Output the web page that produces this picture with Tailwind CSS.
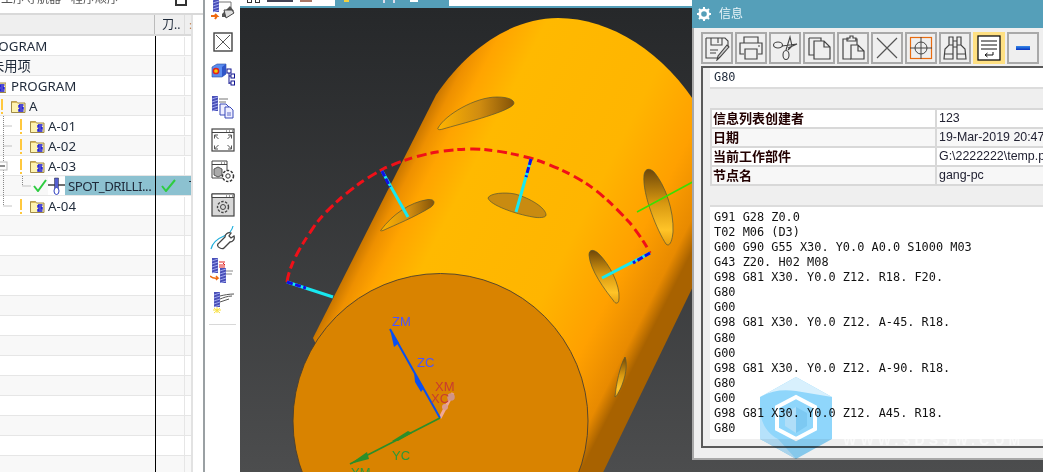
<!DOCTYPE html>
<html lang="en">
<head>
  <meta charset="UTF-8" />
  <title>NX CAM info</title>
  <script src="https://cdn.jsdelivr.net/npm/@tailwindcss/browser@4"></script>
</head>
<body class="bg-white overflow-hidden">

<svg width="0" height="0" class="absolute">
  <defs>
    <g id="folder">
      <path d="M.5 2.500h5l1 1.500h7.500v9.500H.5z" fill="#fdf3b0" stroke="#a08a45"/>
      <path d="M1 2.500h5l1 1.500H1z" fill="#d8b860"/>
      <path d="M8 6h4.500M8 6v2h4M12 8v2H8M8 10v2h4.500" fill="none" stroke="#1515e0" stroke-width="1.400"/>
    </g>
    <g id="tool">
      <rect x="0" y="0" width="6" height="15" fill="#4a50b8"/>
      <path d="M0 3l6-2M0 6l6-2M0 9l6-2M0 12l6-2M0 15l6-2" stroke="#a8b0f0" stroke-width=".9"/>
    </g>
    <linearGradient id="cyl" gradientUnits="userSpaceOnUse" x1="313" y1="338" x2="580" y2="473">
      <stop offset="0" stop-color="#c97600"/>
      <stop offset=".04" stop-color="#ee9000"/>
      <stop offset=".1" stop-color="#ffa400"/>
      <stop offset=".22" stop-color="#ffb900"/>
      <stop offset=".62" stop-color="#ffb500"/>
      <stop offset=".82" stop-color="#ffa000"/>
      <stop offset=".95" stop-color="#e88a00"/>
      <stop offset="1" stop-color="#a86200"/>
    </linearGradient>
    <linearGradient id="holeA" x1="0" y1="0" x2="1" y2="0">
      <stop offset="0" stop-color="#ffb400"/>
      <stop offset=".55" stop-color="#d08c10"/>
      <stop offset="1" stop-color="#855408"/>
    </linearGradient>
    <linearGradient id="holeB" x1="0" y1="0" x2="0" y2="1">
      <stop offset="0" stop-color="#6f4708"/>
      <stop offset=".45" stop-color="#d89810"/>
      <stop offset=".8" stop-color="#ffc428"/>
      <stop offset="1" stop-color="#e8a010"/>
    </linearGradient>
  </defs>
</svg>

<div class="relative flex h-[472px] w-[1043px] overflow-hidden font-['Noto_Sans','Noto_Sans_CJK_SC',sans-serif] text-[#1f2a3a]">

  <!-- Operation navigator -->
  <aside class="relative w-[203px] shrink-0 overflow-hidden">
    <div class="flex h-[15px] items-start justify-between overflow-hidden border-b-2 border-[#d9d9d9] pr-[16px]">
      <span class="-translate-y-[8px] whitespace-nowrap pl-[1px] text-[12px] leading-[13px] text-[#555]">工序导航器 - 程序顺序</span>
      <span class="h-[6px] w-[12px] border-2 border-t-0 border-[#333]"></span>
    </div>
    <div class="w-[193px] border-r-2 border-[#e2e2e2]">
      <!-- header -->
      <div class="flex h-[21px] border-b-2 border-[#d9d9d9] bg-[#efefef]">
        <div class="w-[155px] border-r border-[#bbb]"></div>
        <div class="w-[30px] border-r border-[#ddd] pl-[7px] text-[12px] leading-[20px]">刀..</div>
        <div class="w-[6px] pl-[4px] text-[11px] leading-[20px] text-[#c08050]">:</div>
      </div>
      <!-- rows -->
      <div class="flex flex-col text-[13.300px] leading-[19px]">
        <div class="flex h-[20px] items-center border-b border-[#e6e6e6] bg-white pt-[1px]"><div class="w-[155px] shrink-0 overflow-hidden"><div class="-ml-[18px]">PROGRAM</div></div><div class="h-full w-[30px] border-r border-[#e6e6e6]"></div></div>
        <div class="flex h-[20px] items-center border-b border-[#e6e6e6] bg-[#f8f8f8] pt-[1px]"><div class="w-[155px] shrink-0 overflow-hidden"><div class="-ml-[9px]">未用项</div></div><div class="h-full w-[30px] border-r border-[#e6e6e6]"></div></div>
        <div class="flex h-[20px] items-center border-b border-[#e6e6e6] bg-white pt-[1px]"><div class="flex w-[155px] shrink-0 items-center gap-[5px]"><svg width="6" height="15" viewBox="8 0 6 15"><use href="#folder"/></svg><span>PROGRAM</span></div><div class="h-full w-[30px] border-r border-[#e6e6e6]"></div></div>
        <div class="flex h-[20px] items-center border-b border-[#e6e6e6] bg-[#f8f8f8] pt-[1px]"><div class="flex w-[155px] shrink-0 items-center pl-[1px]"><span class="h-[15px] w-[2px] bg-[linear-gradient(#ffc83d_72%,transparent_72%,transparent_84%,#ffc83d_84%)]"></span><svg class="ml-[8px]" width="15" height="15"><use href="#folder"/></svg><span class="ml-[3px]">A</span></div><div class="h-full w-[30px] border-r border-[#e6e6e6]"></div></div>
        <div class="flex h-[20px] items-center border-b border-[#e6e6e6] bg-white pt-[1px]"><div class="flex w-[155px] shrink-0 items-center pl-[20px]"><span class="h-[15px] w-[2px] bg-[linear-gradient(#ffc83d_72%,transparent_72%,transparent_84%,#ffc83d_84%)]"></span><svg class="ml-[8px]" width="15" height="15"><use href="#folder"/></svg><span class="ml-[3px]">A-01</span></div><div class="h-full w-[30px] border-r border-[#e6e6e6]"></div></div>
        <div class="flex h-[20px] items-center border-b border-[#e6e6e6] bg-[#f8f8f8] pt-[1px]"><div class="flex w-[155px] shrink-0 items-center pl-[20px]"><span class="h-[15px] w-[2px] bg-[linear-gradient(#ffc83d_72%,transparent_72%,transparent_84%,#ffc83d_84%)]"></span><svg class="ml-[8px]" width="15" height="15"><use href="#folder"/></svg><span class="ml-[3px]">A-02</span></div><div class="h-full w-[30px] border-r border-[#e6e6e6]"></div></div>
        <div class="flex h-[20px] items-center border-b border-[#e6e6e6] bg-white pt-[1px]"><div class="flex w-[155px] shrink-0 items-center pl-[20px]"><span class="h-[15px] w-[2px] bg-[linear-gradient(#ffc83d_72%,transparent_72%,transparent_84%,#ffc83d_84%)]"></span><svg class="ml-[8px]" width="15" height="15"><use href="#folder"/></svg><span class="ml-[3px]">A-03</span></div><div class="h-full w-[30px] border-r border-[#e6e6e6]"></div></div>
        <div class="flex h-[20px] items-center border-b border-[#e6e6e6] bg-[#f8f8f8]">
          <div class="flex h-full w-[155px] shrink-0 items-center pl-[33px]">
            <svg width="14" height="13" viewBox="0 0 14 13"><path d="M1 7l4 5 8-11" fill="none" stroke="#2ecc40" stroke-width="2"/></svg>
            <svg class="ml-[1px]" width="17" height="18" viewBox="0 0 17 18"><rect x="0" y="0" width="17" height="18" fill="#fff"/><path d="M0 8h17" stroke="#111" stroke-width="1.200"/><path d="M6.500 1h4v9l-.5 5h-3l-.5-5z" fill="#5560d0" stroke="#223" stroke-width=".5"/><ellipse cx="8.500" cy="14" rx="2.500" ry="3.500" fill="#fff" stroke="#3040c0"/></svg>
            <div class="flex h-full flex-1 items-center bg-[#8cc1d0] pl-[3px] pt-[1px] tracking-[-0.5px] whitespace-nowrap">SPOT_DRILLI...</div>
          </div>
          <div class="flex h-full w-[30px] items-center justify-center bg-[#8cc1d0] pr-[4px]"><svg width="15" height="13" viewBox="0 0 15 13"><path d="M1 7l4 5 9-11" fill="none" stroke="#2ecc40" stroke-width="2"/></svg></div>
          <div class="h-full w-[6px] overflow-hidden bg-[#8cc1d0] pl-[4px] text-[11px] leading-[17px]">T</div>
        </div>
        <div class="flex h-[20px] items-center border-b border-[#e6e6e6] bg-white pt-[1px]"><div class="flex w-[155px] shrink-0 items-center pl-[20px]"><span class="h-[15px] w-[2px] bg-[linear-gradient(#ffc83d_72%,transparent_72%,transparent_84%,#ffc83d_84%)]"></span><svg class="ml-[8px]" width="15" height="15"><use href="#folder"/></svg><span class="ml-[3px]">A-04</span></div><div class="h-full w-[30px] border-r border-[#e6e6e6]"></div></div>
        <div class="flex h-[20px] border-b border-[#e6e6e6] bg-[#f8f8f8]"><div class="w-[155px] shrink-0"></div><div class="w-[30px] border-r border-[#e6e6e6]"></div></div>
        <div class="flex h-[20px] border-b border-[#e6e6e6] bg-white"><div class="w-[155px] shrink-0"></div><div class="w-[30px] border-r border-[#e6e6e6]"></div></div>
        <div class="flex h-[20px] border-b border-[#e6e6e6] bg-[#f8f8f8]"><div class="w-[155px] shrink-0"></div><div class="w-[30px] border-r border-[#e6e6e6]"></div></div>
        <div class="flex h-[20px] border-b border-[#e6e6e6] bg-white"><div class="w-[155px] shrink-0"></div><div class="w-[30px] border-r border-[#e6e6e6]"></div></div>
        <div class="flex h-[20px] border-b border-[#e6e6e6] bg-[#f8f8f8]"><div class="w-[155px] shrink-0"></div><div class="w-[30px] border-r border-[#e6e6e6]"></div></div>
        <div class="flex h-[20px] border-b border-[#e6e6e6] bg-white"><div class="w-[155px] shrink-0"></div><div class="w-[30px] border-r border-[#e6e6e6]"></div></div>
        <div class="flex h-[20px] border-b border-[#e6e6e6] bg-[#f8f8f8]"><div class="w-[155px] shrink-0"></div><div class="w-[30px] border-r border-[#e6e6e6]"></div></div>
        <div class="flex h-[20px] border-b border-[#e6e6e6] bg-white"><div class="w-[155px] shrink-0"></div><div class="w-[30px] border-r border-[#e6e6e6]"></div></div>
        <div class="flex h-[20px] border-b border-[#e6e6e6] bg-[#f8f8f8]"><div class="w-[155px] shrink-0"></div><div class="w-[30px] border-r border-[#e6e6e6]"></div></div>
        <div class="flex h-[20px] border-b border-[#e6e6e6] bg-white"><div class="w-[155px] shrink-0"></div><div class="w-[30px] border-r border-[#e6e6e6]"></div></div>
        <div class="flex h-[20px] border-b border-[#e6e6e6] bg-[#f8f8f8]"><div class="w-[155px] shrink-0"></div><div class="w-[30px] border-r border-[#e6e6e6]"></div></div>
        <div class="flex h-[20px] border-b border-[#e6e6e6] bg-white"><div class="w-[155px] shrink-0"></div><div class="w-[30px] border-r border-[#e6e6e6]"></div></div>
        <div class="flex h-[20px] border-b border-[#e6e6e6] bg-[#f8f8f8]"><div class="w-[155px] shrink-0"></div><div class="w-[30px] border-r border-[#e6e6e6]"></div></div>
      </div>
    </div>
    <!-- tree guides + column divider -->
    <svg class="absolute left-0 top-0" width="203" height="472">
      <path d="M3.500 116V206M3.500 126H12M3.500 146H12M3.500 206H12M22.500 176V186H31" fill="none" stroke="#888" stroke-dasharray="1 1"/>
      <rect x="-1" y="162" width="8" height="8" fill="#fff" stroke="#bbb"/>
      <path d="M0 166h5" stroke="#222"/>
      <path d="M155.500 36V472" stroke="#000"/>
    </svg>
  </aside>

  <!-- Vertical toolbar -->
  <nav class="flex w-[37px] shrink-0 flex-col items-center border-l-2 border-[#9aa0a3] bg-white">
    <div class="-mt-[7px] grid auto-rows-[32.600px] place-items-center">
      <svg width="26" height="26" viewBox="0 0 26 26"><use href="#tool" x="3" y="1"/><path d="M9 6h12v6" fill="none" stroke="#777"/><path d="M12 18l8-8 4 5-6 6h-6z" fill="#555"/><path d="M14 14h8l2 3-8 5z" fill="#ddd" stroke="#444"/><path d="M1 20h6l-2-2M7 20l-2 3" stroke="#ef6a10" stroke-width="2" fill="none"/></svg>
      <svg width="20" height="20" viewBox="0 0 20 20"><rect x="1" y="1" width="18" height="18" fill="#fff" stroke="#444" stroke-width="1.400"/><path d="M3 3l14 14M17 3L3 17" stroke="#555"/></svg>
      <svg width="24" height="24" viewBox="0 0 24 24"><path d="M1 5l5-3h9v10l-4 3H1z" fill="#5a8cf0" stroke="#2a4aa0" stroke-width=".6"/><path d="M11 5v10l4-3V2z" fill="#2f55c8"/><circle cx="5" cy="9" r="2.600" fill="#f6d000" stroke="#e02020" stroke-width="1.500"/><path d="M18 9v13M18 14h3M18 21h3" stroke="#111590" fill="none"/><rect x="16" y="7" width="4" height="4" fill="#fff" stroke="#111590"/><rect x="20" y="12" width="3.500" height="4" fill="#fff" stroke="#111590"/><rect x="20" y="19" width="3.500" height="4" fill="#fff" stroke="#111590"/></svg>
      <svg width="24" height="24" viewBox="0 0 24 24"><use href="#tool" x="1" y="1"/><path d="M8 4h9M8 7h7" stroke="#777"/><path d="M9 9h6l3 3v8H9z" fill="#eef" stroke="#3a4ab8"/><path d="M14 12h5l3 3v8h-8z" fill="#eef" stroke="#3a4ab8"/><path d="M16 18h4M16 20h4" stroke="#3a4ab8" stroke-width=".8"/></svg>
      <svg width="24" height="24" viewBox="0 0 24 24"><rect x="1" y="1" width="22" height="22" fill="#fff" stroke="#444" stroke-width="1.200"/><path d="M1 4.500h22" stroke="#444"/><path d="M15 3h1M18 3h1M21 3h1" stroke="#444"/><path d="M3.500 7v3.500M3.500 7H7M3.500 7l4 4M20.500 7v3.500M20.500 7H17M20.500 7l-4 4M3.500 21v-3.500M3.500 21H7M3.500 21l4-4M20.500 21v-3.500M20.500 21H17M20.500 21l-4-4" stroke="#555" fill="none"/></svg>
      <svg width="24" height="24" viewBox="0 0 24 24"><path d="M1 1h15v17H1zM1 4.500h15" fill="#fff" stroke="#444"/><path d="M10 3h1M13 3h1" stroke="#444"/><path d="M3 9l4-2 4 2v6l-4 2-4-2z" fill="#aaa" stroke="#555"/><circle cx="17" cy="16" r="5.500" fill="#fff" stroke="#333" stroke-width="1.500" stroke-dasharray="2.500 1.500"/><circle cx="17" cy="16" r="2.200" fill="#fff" stroke="#333"/></svg>
      <svg width="24" height="24" viewBox="0 0 24 24"><rect x="1" y="1" width="22" height="22" fill="#d8d8d8" stroke="#444" stroke-width="1.200"/><path d="M1 1h22v3.500H1z" fill="#fff" stroke="#444"/><path d="M15 3h1M18 3h1M21 3h1" stroke="#444"/><circle cx="12" cy="14" r="5.500" fill="none" stroke="#444" stroke-width="1.400" stroke-dasharray="2.500 1.400"/><circle cx="12" cy="14" r="2.500" fill="none" stroke="#444"/></svg>
      <svg width="25" height="25" viewBox="0 0 25 25"><path d="M1 24c2-8 8-11 13-13 5-2 8-5 9-10" fill="none" stroke="#1eaedc" stroke-width="1.200"/><path d="M10 23c-3-1-3-4-1-5l6-6c0-3 3-5 6-4l-2 3 2 2 3-2c1 3-1 6-4 6l-6 6c-1 1-2 1-4 0z" fill="#fff" stroke="#444" stroke-width="1.300"/></svg>
      <svg width="25" height="25" viewBox="0 0 25 25"><use href="#tool" x="2" y="0"/><use href="#tool" x="10" y="10"/><path d="M9 4h6M9 7h6l-2-2M15 9H9" stroke="#e02020" fill="none"/><path d="M16 13h7M16 16h6" stroke="#888"/><path d="M0 18c2 2 4 3 8 2l-2-2M8 20l-2 2" stroke="#ef6a10" stroke-width="1.500" fill="none"/></svg>
      <svg width="25" height="25" viewBox="0 0 25 25"><use href="#tool" x="4" y="2"/><path d="M10 6c4-1 9-2 14-2M10 9c3-1 7-3 12-3M10 12c3-1 6-2 9-3" stroke="#555" fill="none"/><path d="M7 17v6M3 20h8M4 18l6 5M10 18l-6 5" stroke="#f8e040"/></svg>
    </div>
    <div class="mt-[5px] h-[1px] w-[27px] bg-[#d8d8d8]"></div>
  </nav>

  <!-- Graphics window -->
  <main class="flex flex-1 flex-col">
    <div class="flex h-[8px] shrink-0 border-b-2 border-[#559fb9] bg-white">
      <div class="flex w-[95px] items-start gap-[3px] pl-[7px]"><span class="h-[3px] w-[5px] border border-t-0 border-[#333]"></span><span class="h-[3px] w-[5px] border border-t-0 border-[#333]"></span><span class="ml-[4px] h-[2px] w-[26px] bg-[#445]"></span><span class="ml-[4px] h-[2px] w-[12px] bg-[#a76]"></span></div>
      <div class="flex w-[114px] items-start bg-[#559fb9] pl-[9px]"><span class="h-[2px] w-[5px] bg-[#f0d040]"></span><span class="ml-[34px] h-[3px] w-[2px] bg-[#dde]"></span><span class="ml-[8px] h-[3px] w-[2px] bg-[#dde]"></span><span class="ml-[15px] h-[2px] w-[8px] bg-white"></span></div>
    </div>
    <div class="relative flex-1 bg-linear-to-b from-[#26282a] to-[#4c4d4e]">
      <svg class="absolute left-0 top-0" width="803" height="464" viewBox="240 8 803 464">
        <!-- cylinder body -->
        <path d="M313 338L436 95C470 45 515 18 558 18C610 18 665 52 700 110L700 272L580 520L400 520z" fill="url(#cyl)"/>
        <!-- holes -->
        <path d="M438 128C445 115 475 97 497 97C512 97 516 102 513 105C505 113 460 124 443 129C440 130 437 130 438 128Z" fill="url(#holeA)" stroke="#553" stroke-width=".7"/>
        <path d="M381 230C392 215 410 202 428 199.500C436 199 435 204 431 207C415 217 395 225 383 230.500C381 231 380 231 381 230Z" fill="url(#holeA)" stroke="#553" stroke-width=".7"/>
        <path d="M488 198C490 193 505 192 515 194C530 198 546 208 546 215C546 218 538 218 533 217C515 214 490 205 488 198Z" fill="#c98b10" stroke="#553" stroke-width=".7"/>
        <path d="M644 175C645 168 650 168 654 172C665 185 674 210 673 232C672 243 669 247 666 244C658 232 642 195 644 175Z" fill="url(#holeB)" stroke="#553" stroke-width=".7"/>
        <path d="M589 255C589 249 594 249 599 254C610 265 620 285 619 298C619 305 615 304 613 300C605 290 590 270 589 255Z" fill="url(#holeB)" stroke="#553" stroke-width=".7"/>
        <path d="M625 357C627 362 627 372 622 385C619 392 617 396 615 397C616 385 620 365 625 357Z" fill="url(#holeB)" stroke="#553" stroke-width=".7"/>
        <!-- end face -->
        <circle cx="440.500" cy="421" r="147.500" fill="#d98300" stroke="#4a4030" stroke-width=".9"/>
        <!-- toolpath -->
        <path d="M287 282C290 262 303 243 315 225C328 208 345 194 360 183C372 175 380 171 383 169C398 162 415 156 437 152C450 150 460 149 473 149C490 149 510 153 530 158C550 164 570 173 587 184C602 194 615 207 630 223C638 233 645 243 650 253" fill="none" stroke="#f01018" stroke-width="3" stroke-dasharray="10 4 8 5"/>
        <path d="M287 282L333 297M382 171L408 217M531 159L516 212M650 253L602 278" stroke="#18e8f0" stroke-width="3" fill="none"/>
        <path d="M287 282L306 288M382 171L390 187M531 159L526 177M650 253L633 263" stroke="#1010e8" stroke-width="3" stroke-dasharray="6 2.500" fill="none"/>
        <path d="M637 212L700 178" stroke="#3ae000" stroke-width="1.600"/>
        <!-- WCS triad -->
        <path d="M440 418L453 393" stroke="#f0a898" stroke-width="3"/>
        <circle cx="451" cy="397" r="3.800" fill="#cf9488"/>
        <circle cx="445" cy="407" r="3" fill="#dc9c90"/>
        <path d="M440 418L390 329" stroke="#0a50f0" stroke-width="2"/>
        <path d="M390 329L399 343L394 347z" fill="#0a50f0"/>
        <path d="M414 372L424 388L421 392L415 382z" fill="#0a50f0"/>
        <path d="M440 418L350 464" stroke="#2a8f2a" stroke-width="1.800"/>
        <path d="M350 464L367 452L369 459z" fill="#2a8f2a"/>
        <path d="M392 441L408 431L412 433L398 441z" fill="#2a8f2a"/>
        <g font-family="Liberation Sans" font-size="13">
          <text x="392" y="326" fill="#4a55ff">ZM</text>
          <text x="417" y="367" fill="#4a55ff">ZC</text>
          <text x="435" y="391" fill="#c83c30">XM</text>
          <text x="431" y="403" fill="#c83c30">XC</text>
          <text x="392" y="460" fill="#2a9a38">YC</text>
          <text x="351" y="477" fill="#2a9a38">YM</text>
        </g>
      </svg>
    </div>
  </main>

  <!-- Information window -->
  <section class="absolute left-[692px] top-0 flex h-[460px] w-[351px] flex-col border-b-2 border-l-2 border-[#a8a8a8] bg-[#efefef]">
    <header class="-ml-[2px] flex h-[28px] shrink-0 items-center gap-[8px] bg-[#559fb9] pl-[5px] text-[12px] text-[#e8f4f8]">
      <svg width="14" height="14" viewBox="0 0 14 14"><circle cx="7" cy="7" r="4.200" fill="none" stroke="#fff" stroke-width="2.800"/><path d="M7 0v3M7 11v3M0 7h3M11 7h3M2 2l2 2M10 10l2 2M12 2l-2 2M4 10l-2 2" stroke="#fff" stroke-width="2"/></svg>
      <span>信息</span>
    </header>
    <div class="flex shrink-0 gap-[2px] pl-[7px] pt-[4px]">
      <div class="flex h-[32px] w-[32px] items-center justify-center border-2 border-[#a9a9a9]"><svg width="26" height="26" viewBox="0 0 26 26" fill="none" stroke="#444" stroke-width="1.100"><path d="M2 3h19l3 3v6M2 3v20h12M7 3v7h11V3M14 3v5"/><path d="M6 15h8M6 18h6"/><path d="M25 12l-9 10-3 3 1-4 9-11z" fill="#ccc"/></svg></div>
      <div class="flex h-[32px] w-[32px] items-center justify-center border-2 border-[#a9a9a9]"><svg width="26" height="26" viewBox="0 0 26 26" fill="none" stroke="#444" stroke-width="1.200"><path d="M6 8V2h14v6M6 19H2V8h22v11h-4"/><path d="M7 14h12v10H7zM20 11h2"/></svg></div>
      <div class="flex h-[32px] w-[32px] items-center justify-center border-2 border-[#a9a9a9]"><svg width="26" height="26" viewBox="0 0 26 26" fill="none" stroke="#444" stroke-width="1.100"><ellipse cx="6" cy="10" rx="4.500" ry="3"/><ellipse cx="14" cy="20" rx="3" ry="4.500"/><path d="M10 11l15-2-9 4M14 15l4-13 2 9-4 4"/></svg></div>
      <div class="flex h-[32px] w-[32px] items-center justify-center border-2 border-[#a9a9a9]"><svg width="26" height="26" viewBox="0 0 26 26" fill="none" stroke="#444" stroke-width="1.200"><path d="M3 3h12v3M3 3v17h5"/><path d="M8 6h10l6 6v12H8zM18 6v6h6"/></svg></div>
      <div class="flex h-[32px] w-[32px] items-center justify-center border-2 border-[#a9a9a9]"><svg width="26" height="26" viewBox="0 0 26 26" fill="none" stroke="#444" stroke-width="1.200"><path d="M9 4H3v20h8M15 4h2v6"/><path d="M7 6V3h3V1h3v2h3v3z"/><path d="M11 10h7l6 6v8H11zM18 10v6h6"/></svg></div>
      <div class="flex h-[32px] w-[32px] items-center justify-center border-2 border-[#a9a9a9]"><svg width="26" height="26" viewBox="0 0 26 26"><path d="M3 3l20 20M23 3L3 23" stroke="#555" stroke-width="1.200"/></svg></div>
      <div class="flex h-[32px] w-[32px] items-center justify-center border-2 border-[#a9a9a9]"><svg width="24" height="24" viewBox="0 0 24 24" fill="none"><rect x="1.500" y="1.500" width="21" height="21" stroke="#e86c10" stroke-width="1.200"/><circle cx="12" cy="12" r="6" stroke="#444"/><path d="M12 1v22M1 12h22" stroke="#444"/></svg></div>
      <div class="flex h-[32px] w-[32px] items-center justify-center border-2 border-[#a9a9a9]"><svg width="26" height="26" viewBox="0 0 26 26" fill="none" stroke="#444" stroke-width="1.200"><path d="M7 10V2h4v8M15 10V2h4v8M11 6h4M11 12h4M2 24l1-10 4-4h4v14zM24 24l-1-10-4-4h-4v14zM2 19h9M15 19h9"/></svg></div>
      <div class="flex h-[32px] w-[32px] items-center justify-center bg-[#ffe082]"><svg width="24" height="26" viewBox="0 0 24 26" fill="none"><rect x="1" y="1" width="22" height="24" fill="#fff" stroke="#111" stroke-width="1.300"/><path d="M4 6h16M4 10h16M4 14h16" stroke="#111"/><path d="M8 20h8v-3M8 20l2.500-2M8 20l2.500 2" stroke="#111"/></svg></div>
      <div class="flex h-[32px] w-[32px] items-center justify-center border-2 border-[#a9a9a9]"><span class="h-[4px] w-[14px] bg-gradient-to-b from-[#3a8ae8] to-[#1030c0]"></span></div>
    </div>
    <!-- listing frame -->
    <div class="ml-[7px] mt-[2px] h-[382px] border-2 border-r-0 border-[#5a5a5a] pl-[7px]">
      <div class="h-[21px] border-b-2 border-[#dcdcdc] bg-white pl-[4px] font-['DejaVu_Sans_Mono',monospace] text-[11.900px] leading-[19px]">G80</div>
      <div class="h-[19px]"></div>
      <table class="w-full table-fixed border-collapse border-2 border-r-0 border-[#d8d8d8] text-[#111]">
        <tbody>
          <tr class="h-[19px] bg-white">
            <td class="w-[225px] border-2 border-[#d8d8d8] pl-[1px] font-['Liberation_Sans','Noto_Sans_CJK_SC',sans-serif] text-[13px] leading-[15px] font-bold text-[#200]">信息列表创建者</td>
            <td class="border-y-2 border-[#d8d8d8] pl-[2px] font-['Liberation_Sans',sans-serif] text-[12.400px] leading-[15px] whitespace-nowrap text-[#223]">123</td>
          </tr>
          <tr class="h-[19px] bg-[#f7f7f7]">
            <td class="border-2 border-[#d8d8d8] pl-[1px] font-['Liberation_Sans','Noto_Sans_CJK_SC',sans-serif] text-[13px] leading-[15px] font-bold text-[#200]">日期</td>
            <td class="border-y-2 border-[#d8d8d8] pl-[2px] font-['Liberation_Sans',sans-serif] text-[12.400px] leading-[15px] whitespace-nowrap text-[#223]">19-Mar-2019 20:47</td>
          </tr>
          <tr class="h-[19px] bg-white">
            <td class="border-2 border-[#d8d8d8] pl-[1px] font-['Liberation_Sans','Noto_Sans_CJK_SC',sans-serif] text-[13px] leading-[15px] font-bold text-[#200]">当前工作部件</td>
            <td class="border-y-2 border-[#d8d8d8] pl-[2px] font-['Liberation_Sans',sans-serif] text-[12.400px] leading-[15px] whitespace-nowrap text-[#223]">G:\2222222\temp.prt</td>
          </tr>
          <tr class="h-[19px] bg-[#f7f7f7]">
            <td class="border-2 border-[#d8d8d8] pl-[1px] font-['Liberation_Sans','Noto_Sans_CJK_SC',sans-serif] text-[13px] leading-[15px] font-bold text-[#200]">节点名</td>
            <td class="border-y-2 border-[#d8d8d8] pl-[2px] font-['Liberation_Sans',sans-serif] text-[12.400px] leading-[15px] whitespace-nowrap text-[#223]">gang-pc</td>
          </tr>
        </tbody>
      </table>
      <div class="h-[19px]"></div>
      <pre class="h-[234px] border-t-2 border-[#dcdcdc] bg-white pl-[4px] pt-[3px] font-['DejaVu_Sans_Mono',monospace] text-[11.900px] leading-[15.070px] text-[#111]">G91 G28 Z0.0
T02 M06 (D3)
G00 G90 G55 X30. Y0.0 A0.0 S1000 M03
G43 Z20. H02 M08
G98 G81 X30. Y0.0 Z12. R18. F20.
G80
G00
G98 G81 X30. Y0.0 Z12. A-45. R18.
G80
G00
G98 G81 X30. Y0.0 Z12. A-90. R18.
G80
G00
G98 G81 X30. Y0.0 Z12. A45. R18.
G80</pre>
    </div>
  </section>

  <!-- Site watermark -->
  <svg class="absolute left-[760px] top-[377px] mix-blend-multiply" width="72" height="82" viewBox="0 0 72 82">
    <path d="M36 0L72 20V62L36 82L0 62V20z" fill="#8fd6fb"/>
    <path d="M36 0L72 20L36 14C22 12 10 14 0 20z" fill="#d8f0fd"/>
    <path d="M0 20C-2 40 4 55 18 62L36 82L0 62z" fill="#b6e2fb"/>
    <path d="M36 20L55 30V52L36 62L17 52V30z" fill="none" stroke="#fff" stroke-width="4"/>
    <path d="M36 30L47 36V49L36 56z" fill="#7dc9f2"/>
    <path d="M36 30L25 36V49L36 56z" fill="#b0def8"/>
  </svg>
  <span class="absolute left-[843px] top-[431px] whitespace-nowrap font-['Liberation_Sans',sans-serif] text-[14px] leading-[18px] font-bold tracking-[4.200px] text-white/60">WWW.3DSJW.COM</span>
</div>
</body>
</html>
